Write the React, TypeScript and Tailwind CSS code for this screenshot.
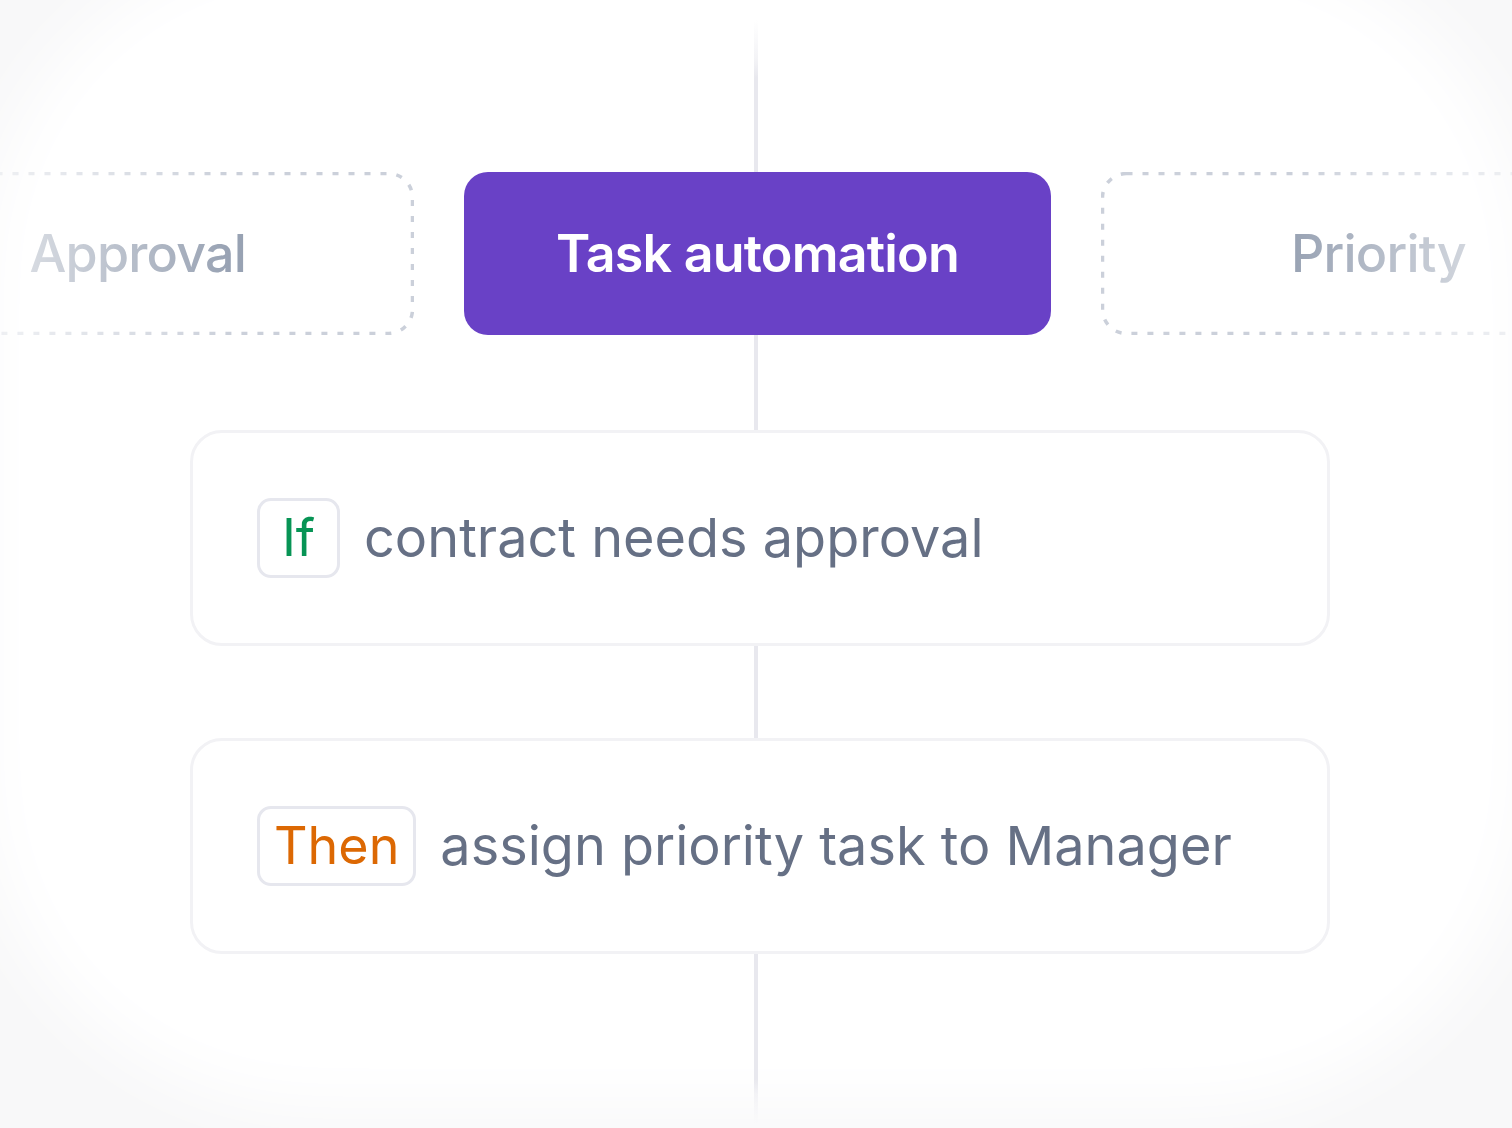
import type { ReactNode } from 'react';

const LINE = 'bg-[#e8e8ee]';

function Connector({ className = '' }: { className?: string }) {
  return <div className={`mx-auto w-[4px] shrink-0 ${className}`} />;
}

function DashedPill({ label, align }: { label: string; align: 'left' | 'right' }) {
  return (
    <div
      className={`relative flex h-[163px] w-[587px] shrink-0 items-center ${
        align === 'left' ? 'justify-end pr-[168px]' : 'justify-start pl-[190px]'
      }`}
    >
      <svg className="absolute inset-0 h-full w-full" viewBox="0 0 587 163" fill="none">
        <rect
          x="1.5"
          y="1.5"
          width="584"
          height="160"
          rx="24"
          stroke="#cbd0da"
          strokeWidth="3.5"
          strokeDasharray="6 10"
        />
      </svg>
      <span className="relative text-[52px] font-medium leading-none tracking-[-0.8px] text-[#98a2b3]">
        {label}
      </span>
    </div>
  );
}

function RuleCard({ badge, badgeColor, children }: { badge: string; badgeColor: string; children: ReactNode }) {
  return (
    <div className="ml-[190px] flex h-[216px] w-[1140px] shrink-0 items-center gap-6 rounded-[32px] border-[3px] border-[#f2f2f5] bg-white px-16">
      <span
        className={`flex h-[80px] min-w-[83px] items-center justify-center rounded-[14px] border-[3px] border-[#e6e7ee] px-[14px] text-[52px] leading-none ${badgeColor}`}
      >
        {badge}
      </span>
      <span className="text-[54px] leading-none text-[#667085]">{children}</span>
    </div>
  );
}

export default function App() {
  return (
    <div className="h-[1128px] w-[1512px] overflow-hidden bg-[#f8f8f9] p-[40px] font-[Inter,sans-serif]">
      <div className="h-full rounded-[280px] bg-white shadow-[0_0_70px_60px_#ffffff]">
        <div className="-m-[40px] flex h-[1128px] flex-col">
          {/* top connector, fades in */}
          <Connector className="h-[172px] bg-[linear-gradient(to_bottom,transparent_20px,#f3f3f6_60px,#e8e8ee_78px)]" />

          <div className="flex h-[163px] shrink-0 justify-center gap-[50px] pl-[3px] [mask-image:linear-gradient(to_right,rgba(0,0,0,0.3),#000_230px,#000_1290px,rgba(0,0,0,0.3))]">
            <DashedPill label="Approval" align="left" />
            <div className="flex h-[163px] w-[587px] shrink-0 items-center justify-center rounded-[24px] bg-[#6941c6]">
              <span className="text-[52px] font-semibold leading-none tracking-[-0.8px] text-white">
                Task automation
              </span>
            </div>
            <DashedPill label="Priority" align="right" />
          </div>

          <Connector className={`h-[95px] ${LINE}`} />

          <RuleCard badge="If" badgeColor="text-[#079455]">
            contract needs approval
          </RuleCard>

          <Connector className={`h-[92px] ${LINE}`} />

          <RuleCard badge="Then" badgeColor="text-[#dc6803]">
            assign priority task to Manager
          </RuleCard>

          {/* bottom connector, fades out */}
          <Connector className="h-[174px] bg-[linear-gradient(to_bottom,#e8e8ee_125px,#f3f3f6_140px,transparent_170px)]" />
        </div>
      </div>
    </div>
  );
}
